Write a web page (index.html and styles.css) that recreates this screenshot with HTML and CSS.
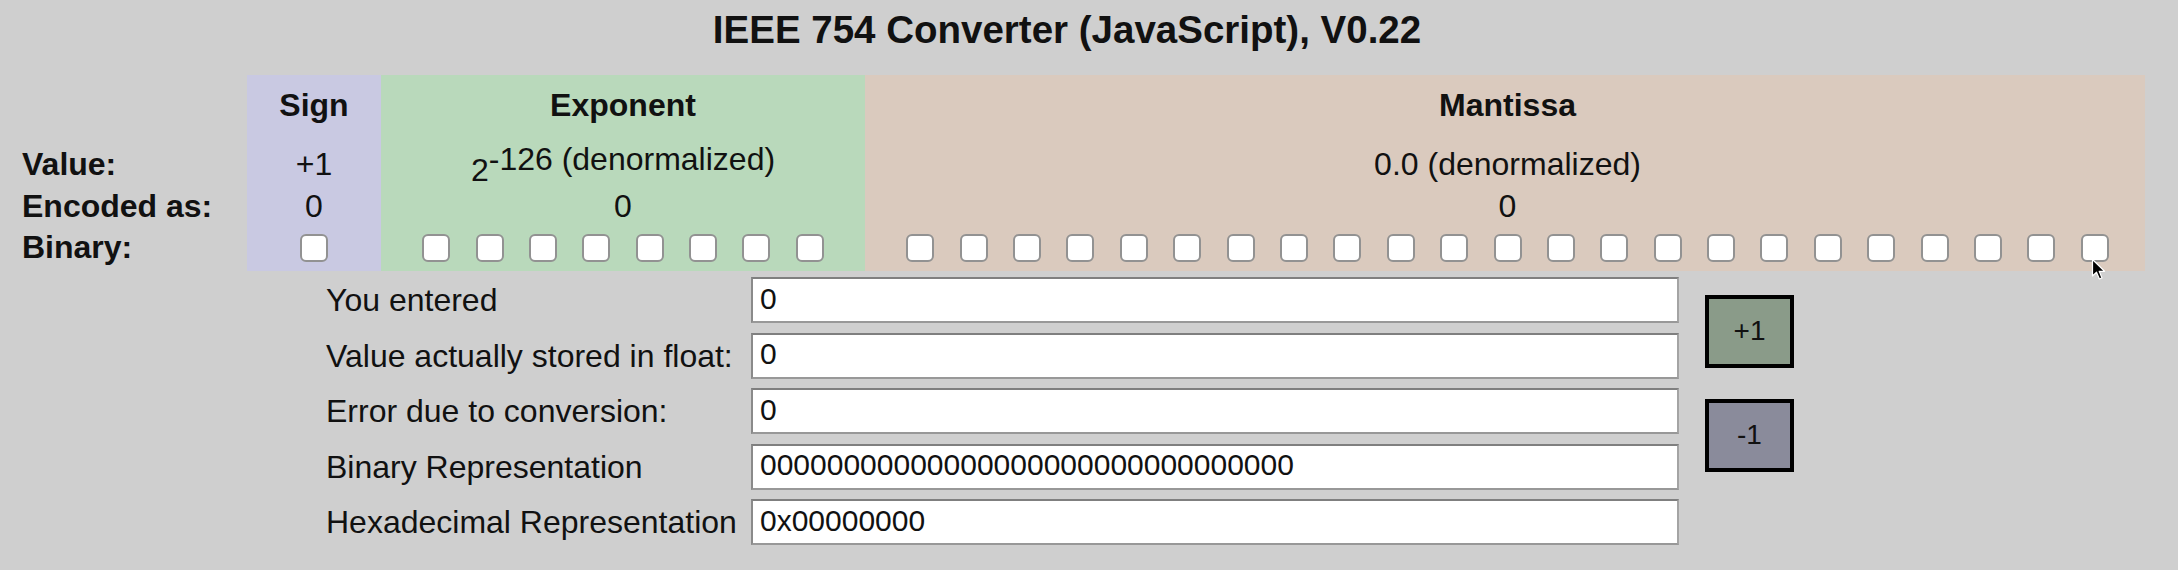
FILE: index.html
```html
<!DOCTYPE html>
<html lang="en">
<head>
<meta charset="utf-8">
<title>IEEE 754 Converter</title>
<link rel="stylesheet" href="styles.css">
</head>
<body>
<h1 class="title">IEEE 754 Converter (JavaScript), V0.22</h1>

<div class="fields">
  <div class="col labels">
    <div class="cell head"></div>
    <div class="cell">Value:</div>
    <div class="cell">Encoded as:</div>
    <div class="cell">Binary:</div>
  </div>
  <div class="col sign">
    <div class="cell head">Sign</div>
    <div class="cell">+1</div>
    <div class="cell">0</div>
    <div class="cell bits"><input type="checkbox" class="bit"></div>
  </div>
  <div class="col exponent">
    <div class="cell head">Exponent</div>
    <div class="cell"><span>2<sup class="raise">-126 (denormalized)</sup></span></div>
    <div class="cell">0</div>
    <div class="cell bits">
      <input type="checkbox" class="bit"><input type="checkbox" class="bit"><input type="checkbox" class="bit"><input type="checkbox" class="bit"><input type="checkbox" class="bit"><input type="checkbox" class="bit"><input type="checkbox" class="bit"><input type="checkbox" class="bit">
    </div>
  </div>
  <div class="col mantissa">
    <div class="cell head">Mantissa</div>
    <div class="cell">0.0 (denormalized)</div>
    <div class="cell">0</div>
    <div class="cell bits">
      <input type="checkbox" class="bit"><input type="checkbox" class="bit"><input type="checkbox" class="bit"><input type="checkbox" class="bit"><input type="checkbox" class="bit"><input type="checkbox" class="bit"><input type="checkbox" class="bit"><input type="checkbox" class="bit"><input type="checkbox" class="bit"><input type="checkbox" class="bit"><input type="checkbox" class="bit"><input type="checkbox" class="bit"><input type="checkbox" class="bit"><input type="checkbox" class="bit"><input type="checkbox" class="bit"><input type="checkbox" class="bit"><input type="checkbox" class="bit"><input type="checkbox" class="bit"><input type="checkbox" class="bit"><input type="checkbox" class="bit"><input type="checkbox" class="bit"><input type="checkbox" class="bit"><input type="checkbox" class="bit">
    </div>
  </div>
</div>

<div class="io">
  <div class="buttons">
    <button class="btn plus">+1</button>
    <button class="btn minus">-1</button>
  </div>
  <label class="io-label">You entered</label>
  <input class="io-input" type="text" value="0">
  <label class="io-label">Value actually stored in float:</label>
  <input class="io-input" type="text" value="0">
  <label class="io-label">Error due to conversion:</label>
  <input class="io-input" type="text" value="0">
  <label class="io-label">Binary Representation</label>
  <input class="io-input" type="text" value="00000000000000000000000000000000">
  <label class="io-label">Hexadecimal Representation</label>
  <input class="io-input" type="text" value="0x00000000">
</div>

<svg class="cursor" width="16" height="24" viewBox="0 0 16 24" aria-hidden="true">
  <path d="M1.5 1.5 L1.5 18 L5.5 14.2 L8.4 21 L11 19.9 L8.2 13.3 L13.6 13.3 Z" fill="#000" stroke="#fff" stroke-width="1.2" stroke-linejoin="round"/>
</svg>
</body>
</html>
```

FILE: styles.css
```css
html, body {
  margin: 0;
  padding: 0;
}

body {
  position: relative;
  width: 2178px;
  height: 570px;
  overflow: hidden;
  background: #cfcfcf;
  color: #111;
  font-family: "Liberation Sans", Arial, Helvetica, sans-serif;
  font-size: 32px;
}

.title {
  margin: 0;
  padding: 8px 44px 0 0;
  font-size: 38.5px;
  line-height: 44px;
  font-weight: bold;
  text-align: center;
}

.fields {
  display: flex;
  margin-top: 23px;
}

.col {
  display: flex;
  flex-direction: column;
  padding-bottom: 2px;
}

.labels {
  width: 247px;
  padding-left: 22px;
  box-sizing: border-box;
  font-weight: bold;
}

.sign {
  width: 134px;
  background: #c9c9e2;
}

.exponent {
  width: 484px;
  background: #b9d9bb;
}

.mantissa {
  width: 1280px;
  background: #dacabe;
  padding-left: 5px;
  box-sizing: border-box;
}

.cell {
  height: 41.5px;
  line-height: 41.5px;
  display: flex;
  align-items: center;
  white-space: nowrap;
}

.sign .cell,
.exponent .cell,
.mantissa .cell {
  justify-content: center;
}

.cell.head {
  height: 69px;
  padding-top: 10px;
  box-sizing: border-box;
  align-items: flex-start;
  font-weight: bold;
}

.raise {
  font-size: inherit;
  vertical-align: 11px;
  line-height: 41.5px;
}

.bits {
  gap: 25.4px;
}

.bit {
  appearance: none;
  -webkit-appearance: none;
  width: 28px;
  height: 28px;
  margin: 0;
  flex: none;
  box-sizing: border-box;
  border: 2px solid #929292;
  border-radius: 6px;
  background: #fff;
}

.io {
  display: grid;
  grid-template-columns: 425px 928px 115px;
  grid-template-rows: repeat(5, 46px);
  row-gap: 9.5px;
  margin: 6.5px 0 0 326px;
}

.io-label {
  grid-column: 1;
  align-self: center;
  line-height: 36px;
  white-space: nowrap;
}

.io-input {
  grid-column: 2;
  width: 100%;
  height: 100%;
  box-sizing: border-box;
  margin: 0;
  padding: 0 7px 3px;
  border: 2px solid;
  border-color: #7f7f7f #a4a4a4 #989898 #8a8a8a;
  border-radius: 0;
  background: #fff;
  color: #111;
  font-family: "Liberation Sans", Arial, Helvetica, sans-serif;
  font-size: 30px;
  outline: none;
}

.buttons {
  grid-column: 3;
  grid-row: 1 / 5;
  justify-self: end;
  align-self: center;
  display: flex;
  flex-direction: column;
  gap: 31px;
}

.btn {
  width: 89px;
  height: 73px;
  margin: 0;
  padding: 0;
  border: 4px solid #000;
  border-radius: 0;
  color: #111;
  font-family: "Liberation Sans", Arial, Helvetica, sans-serif;
  font-size: 28px;
}

.plus {
  background: #8a9b89;
}

.minus {
  background: #8a8b9b;
}

.cursor {
  position: absolute;
  left: 2091px;
  top: 258px;
}
```
